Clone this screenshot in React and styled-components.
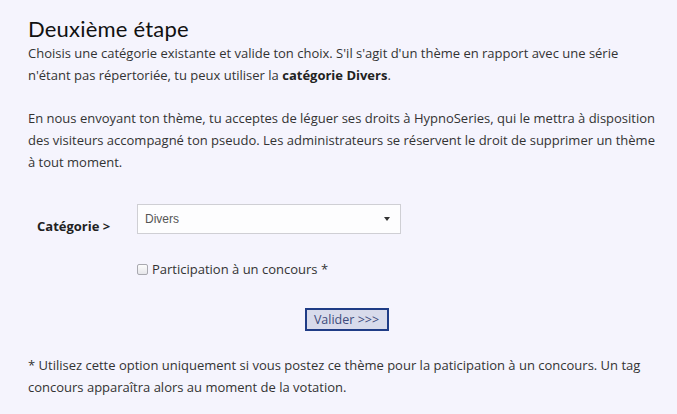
import React from "react";
import styled, { createGlobalStyle } from "styled-components";

const GlobalStyle = createGlobalStyle`
  html, body {
    margin: 0;
    padding: 0;
    background: #f5f4fd;
  }
  body {
    font-family: "Open Sans", "Liberation Sans", sans-serif;
    color: #333;
  }
`;

const Page = styled.div`
  width: 677px;
  height: 414px;
  box-sizing: border-box;
  padding: 16px 12px 0 28px;
  background: #f5f4fd;
  overflow: hidden;
`;

const Title = styled.h2`
  margin: 0;
  font-family: "Lato", "Noto Sans", sans-serif;
  font-weight: 400;
  font-size: 22px;
  line-height: 26px;
  color: #111;
  letter-spacing: 0.2px;
`;

const Text = styled.p`
  margin: ${(p) => p.$top || 0}px 0 0 0;
  font-size: 13px;
  line-height: 22px;
  color: #333;

  b {
    font-weight: 700;
    color: #222;
  }
`;

const FormRow = styled.div`
  display: grid;
  grid-template-columns: 109px 264px;
  align-items: start;
  margin-top: ${(p) => p.$top || 0}px;
`;

const Label = styled.label`
  padding: 11px 0 0 9px;
  font-size: 13px;
  font-weight: 700;
  line-height: 22px;
  color: #222;
`;

const SelectBox = styled.div`
  height: 30px;
  box-sizing: border-box;
  border: 1px solid #cfcfd4;
  background: #fdfdfe;
  display: flex;
  align-items: center;
  justify-content: space-between;
  padding: 0 10px 0 7px;
  font-family: "Liberation Sans", Arial, sans-serif;
  font-size: 12px;
  color: #555;
`;

const Caret = styled.span`
  width: 0;
  height: 0;
  border-left: 3px solid transparent;
  border-right: 3px solid transparent;
  border-top: 4px solid #333;
`;

const CheckRow = styled.label`
  display: flex;
  align-items: center;
  gap: 4px;
  margin: ${(p) => p.$top || 0}px 0 0 109px;
  font-size: 13px;
  line-height: 22px;
  color: #333;
`;

const Box = styled.span`
  width: 11px;
  height: 11px;
  box-sizing: border-box;
  border: 1px solid #a9a9b0;
  border-radius: 2px;
  background: linear-gradient(#fcfcfc, #e6e6ea);
`;

const ButtonRow = styled.div`
  display: flex;
  justify-content: center;
  margin-top: ${(p) => p.$top || 0}px;
`;

const Button = styled.button`
  width: 84px;
  height: 23px;
  box-sizing: border-box;
  border: 2px solid #1f3c86;
  background: #d8dbeb;
  color: #3d4b7c;
  font-family: "Open Sans", sans-serif;
  font-size: 12.5px;
  line-height: 17px;
  padding: 0;
  cursor: pointer;
`;

export default function App() {
  return (
    <>
      <GlobalStyle />
      <Page>
        <Title>Deuxième étape</Title>
        <Text>
          Choisis une catégorie existante et valide ton choix. S'il s'agit d'un thème en rapport avec une série
          <br />
          n'étant pas répertoriée, tu peux utiliser la <b>catégorie Divers</b>.
        </Text>
        <Text $top={21}>
          En nous envoyant ton thème, tu acceptes de léguer ses droits à HypnoSeries, qui le mettra à disposition
          des visiteurs accompagné ton pseudo. Les administrateurs se réservent le droit de supprimer un thème
          à tout moment.
        </Text>
        <FormRow $top={31}>
          <Label>Catégorie &gt;</Label>
          <SelectBox>
            <span>Divers</span>
            <Caret />
          </SelectBox>
        </FormRow>
        <CheckRow $top={21}>
          <Box />
          Participation à un concours *
        </CheckRow>
        <ButtonRow $top={28}>
          <Button>Valider &gt;&gt;&gt;</Button>
        </ButtonRow>
        <Text $top={23}>
          * Utilisez cette option uniquement si vous postez ce thème pour la paticipation à un concours. Un tag
          concours apparaîtra alors au moment de la votation.
        </Text>
      </Page>
    </>
  );
}
